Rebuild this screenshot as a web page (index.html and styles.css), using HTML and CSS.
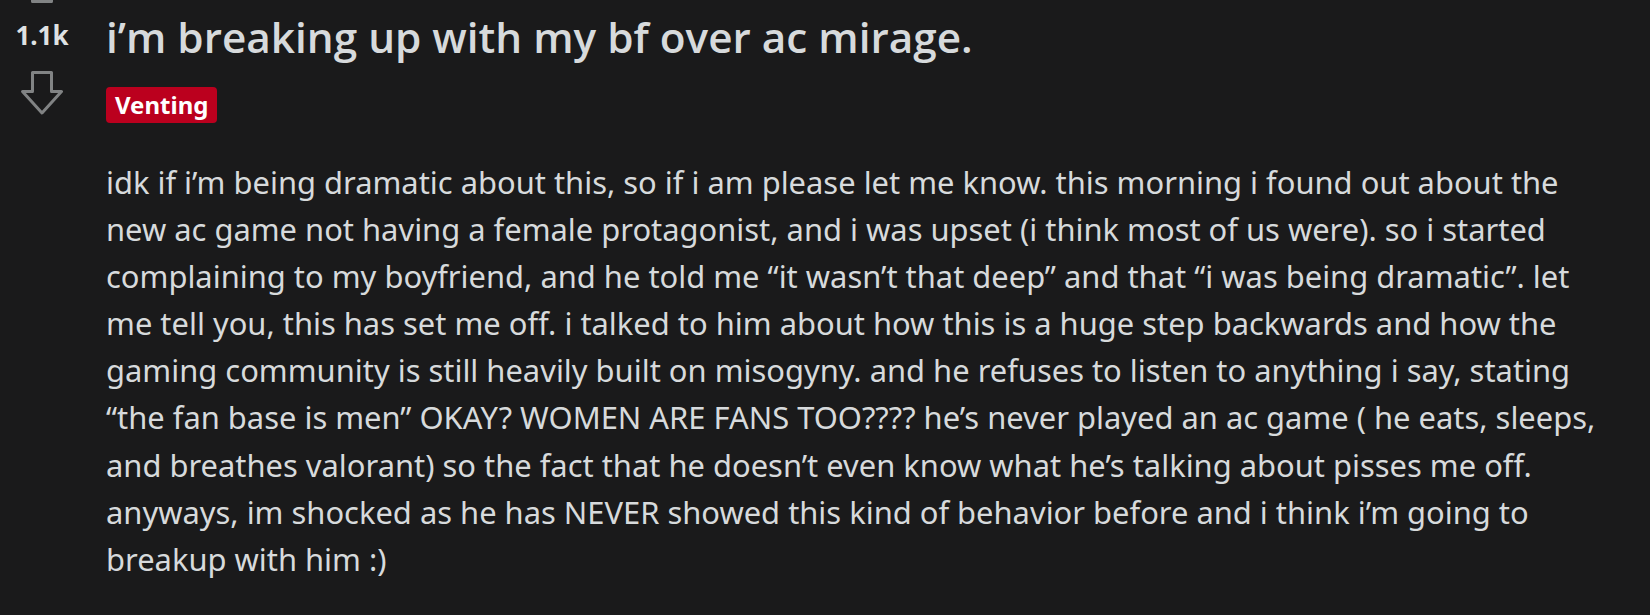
FILE: index.html
```html
<!DOCTYPE html>
<html>
<head>
<meta charset="utf-8">
<link rel="stylesheet" href="styles.css">
</head>
<body>
<div class="post">
  <div class="votes">
    <svg class="arrow up" width="42" height="44" viewBox="0 0 42 44"><path d="M11.5 42.5V23.5H1.5L21 2L40.5 23.5H30.5V42.5Z" fill="none" stroke="#818384" stroke-width="3" stroke-linejoin="round"/></svg>
    <div class="count">1.1k</div>
    <svg class="arrow down" width="42" height="44" viewBox="0 0 42 44"><path d="M11.5 1.5V20.5H1.5L21 42L40.5 20.5H30.5V1.5Z" fill="none" stroke="#818384" stroke-width="3" stroke-linejoin="round"/></svg>
  </div>
  <div class="content">
    <h1 class="title">i’m breaking up with my bf over ac mirage.</h1>
    <div class="flairs"><span class="flair">Venting</span></div>
    <p class="body">idk if i’m being dramatic about this, so if i am please let me know. this morning i found out about the new ac game not having a female protagonist, and i was upset (i think most of us were). so i started complaining to my boyfriend, and he told me “it wasn’t that deep” and that “i was being dramatic”. let me tell you, this has set me off. i talked to him about how this is a huge step backwards and how the gaming community is still heavily built on misogyny. and he refuses to listen to anything i say, stating “the fan base is men” OKAY? WOMEN ARE FANS TOO???? he’s never played an ac game ( he eats, sleeps, and breathes valorant) so the fact that he doesn’t even know what he’s talking about pisses me off. anyways, im shocked as he has NEVER showed this kind of behavior before and i think i’m going to breakup with him :)</p>
  </div>
</div>
</body>
</html>
```
FILE: styles.css
```css
html, body {
  margin: 0;
  padding: 0;
  background: #1a1a1b;
  height: 100%;
  overflow: hidden;
}
.post {
  display: flex;
  font-family: "Noto Sans", sans-serif;
  color: #d7dadc;
}
.votes {
  width: 84px;
  flex: none;
  display: flex;
  flex-direction: column;
  align-items: center;
  margin-top: -41px;
}
.arrow {
  display: block;
}
.count {
  font-weight: 700;
  font-size: 26px;
  line-height: 30px;
  margin-top: 17px;
  color: #dfe1e3;
}
.arrow.down {
  margin-top: 21px;
}
.content {
  padding-left: 22px;
  width: 1506px;
}
.title {
  margin: 12px 0 0;
  font-family: "Open Sans", "Noto Sans", sans-serif;
  font-weight: 600;
  font-size: 42.3px;
  line-height: 49px;
  color: #d7dadc;
}
.flairs {
  margin-top: 26px;
  display: flex;
}
.flair {
  background: #bb001e;
  color: #fff;
  font-weight: 700;
  font-size: 24px;
  line-height: 36px;
  padding: 0 9px;
  border-radius: 4px;
}
.body {
  margin: 36px 0 0;
  font-size: 30.9px;
  line-height: 47.1px;
  color: #d7dadc;
}
```
